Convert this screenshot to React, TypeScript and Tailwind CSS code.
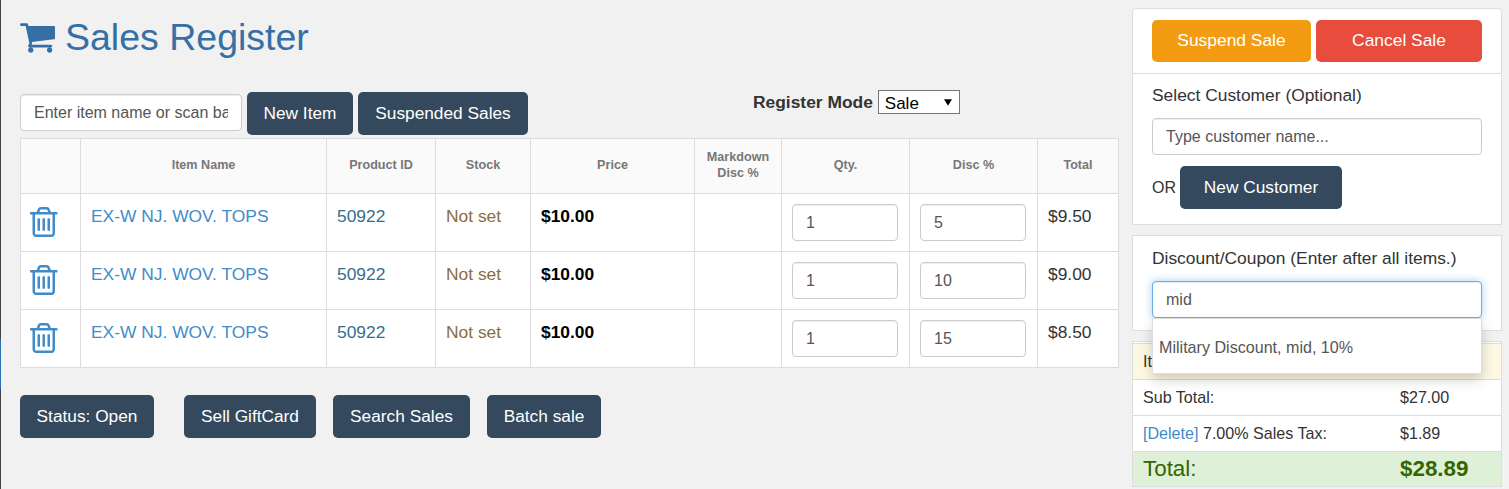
import React from 'react';

const darkBtn =
  'h-[43px] rounded-[5px] bg-[#34495e] text-[17.3px] leading-[43px] text-white text-center shrink-0';
const inputCls =
  'h-[37px] rounded-[4px] border border-[#ccc] bg-white px-[13px] text-[16px] text-[#555] placeholder:text-[#555] shadow-[inset_0_1px_1px_rgba(0,0,0,0.075)] outline-none';
const thCls =
  'border border-[#ddd] bg-[#fafafa] pb-[2px] text-center align-middle text-[12.6px] leading-[16px] font-bold text-[#777]';
const tdCls = 'border border-[#ddd] bg-white px-[10px] pt-[11px] align-top text-[17.4px] leading-[22px]';

function CartIcon() {
  return (
    <svg viewBox="0 256 1664 1408" className="h-[30px] w-[35px] fill-[#366fa5]">
      <path d="M640 1536q0 52-38 90t-90 38-90-38-38-90 38-90 90-38 90 38 38 90zm896 0q0 52-38 90t-90 38-90-38-38-90 38-90 90-38 90 38 38 90zm128-1088v512q0 24-16.500 42.500t-40.500 21.500l-1044 122q13 60 13 70 0 16-24 64h920q26 0 45 19t19 45-19 45-45 19h-1024q-26 0-45-19t-19-45q0-11 8-31.500t16-36 21.500-40 15.500-29.500l-177-823h-204q-26 0-45-19t-19-45 19-45 45-19h256q16 0 28.500 6.500t19.500 15.500 13 24.500 8 26 5.500 29.500 4.500 26h1201q26 0 45 19t19 45z" />
    </svg>
  );
}

function TrashIcon() {
  return (
    <svg viewBox="0 128 1408 1536" className="-ml-px h-[30px] w-[27.500px] fill-[#428bca]">
      <path d="M512 736v576q0 14-9 23t-23 9h-64q-14 0-23-9t-9-23v-576q0-14 9-23t23-9h64q14 0 23 9t9 23zm256 0v576q0 14-9 23t-23 9h-64q-14 0-23-9t-9-23v-576q0-14 9-23t23-9h64q14 0 23 9t9 23zm256 0v576q0 14-9 23t-23 9h-64q-14 0-23-9t-9-23v-576q0-14 9-23t23-9h64q14 0 23 9t9 23zm128 724v-948h-896v948q0 22 7 40.500t14.500 27 10.500 8.500h832q3 0 10.500-8.500t14.500-27 7-40.500zm-672-1076h448l-48-117q-7-9-17-11h-317q-10 2-17 11zm928 32v64q0 14-9 23t-23 9h-96v948q0 83-47 143.500t-113 60.500h-832q-66 0-113-58.500t-47-141.500v-952h-96q-14 0-23-9t-9-23v-64q0-14 9-23t23-9h309l70-167q15-37 54-63t79-26h320q40 0 79 26t54 63l70 167h309q14 0 23 9t9 23z" />
    </svg>
  );
}

const rows = [
  { disc: '5', total: '$9.50' },
  { disc: '10', total: '$9.00' },
  { disc: '15', total: '$8.50' },
];

function CartTable() {
  return (
    <table className="w-[1098px] table-fixed border-collapse">
      <colgroup>
        <col className="w-[60px]" />
        <col className="w-[246px]" />
        <col className="w-[109px]" />
        <col className="w-[95px]" />
        <col className="w-[164px]" />
        <col className="w-[87px]" />
        <col className="w-[128px]" />
        <col className="w-[128px]" />
        <col className="w-[81px]" />
      </colgroup>
      <thead>
        <tr className="h-[55px]">
          <th className={thCls}></th>
          <th className={thCls}>Item Name</th>
          <th className={thCls}>Product ID</th>
          <th className={thCls}>Stock</th>
          <th className={thCls}>Price</th>
          <th className={thCls}>
            Markdown
            <br />
            Disc %
          </th>
          <th className={thCls}>Qty.</th>
          <th className={thCls}>Disc %</th>
          <th className={thCls}>Total</th>
        </tr>
      </thead>
      <tbody>
        {rows.map((row) => (
          <tr key={row.disc} className="h-[58px]">
            <td className={tdCls}>
              <div className="mt-[2px]">
                <TrashIcon />
              </div>
            </td>
            <td className={`${tdCls} text-[#428bca]`}>EX-W NJ. WOV. TOPS</td>
            <td className={`${tdCls} text-[#31708f]`}>50922</td>
            <td className={`${tdCls} text-[#8a6d3b]`}>Not set</td>
            <td className={`${tdCls} font-bold text-black`}>$10.00</td>
            <td className={tdCls}></td>
            <td className={tdCls}>
              <input defaultValue="1" className={`${inputCls} -mt-px block w-[106px]`} />
            </td>
            <td className={tdCls}>
              <input defaultValue={row.disc} className={`${inputCls} -mt-px block w-[106px]`} />
            </td>
            <td className={`${tdCls} text-[#333]`}>{row.total}</td>
          </tr>
        ))}
      </tbody>
    </table>
  );
}

function SummaryRow({
  label,
  value,
  className,
}: {
  label: React.ReactNode;
  value?: React.ReactNode;
  className?: string;
}) {
  return (
    <div className={`flex items-center border-t border-[#ddd] pl-[10px] text-[16.1px] text-[#333] ${className ?? ''}`}>
      <div className="w-[257px]">{label}</div>
      <div>{value}</div>
    </div>
  );
}

export default function App() {
  return (
    <div
      className="relative flex h-[489px] w-[1509px] overflow-hidden bg-[#f1f1f1] pl-px text-[16px] text-[#333]"
      style={{ fontFamily: '"Liberation Sans", Arial, sans-serif' }}
    >
      <span className="absolute top-0 left-0 h-[489px] w-px bg-[#444]" />
      <span className="absolute top-[339px] left-0 h-[50px] w-px bg-[#2a6fb5]" />

      {/* left side */}
      <div className="ml-[19px] w-[1099px] shrink-0">
        <div className="flex h-[90px] items-start gap-[10px] pt-[14px]">
          <div className="mt-[9px]">
            <CartIcon />
          </div>
          <h1 className="text-[37.5px] leading-[46px] text-[#366fa5]">Sales Register</h1>
        </div>

        <div className="flex h-[48px] items-start">
          <input placeholder="Enter item name or scan barcode" className={`${inputCls} mt-[4px] w-[222px]`} />
          <button className={`${darkBtn} mt-[2px] ml-[5px] w-[106px] pb-[2px]`}>New Item</button>
          <button className={`${darkBtn} mt-[2px] ml-[5px] w-[170px]`}>Suspended Sales</button>
          <span className="ml-[225px] text-[17.4px] leading-[24px] font-bold">Register Mode</span>
          <div className="relative ml-[5px]">
            <select className="h-[24px] w-[82px] appearance-none rounded-none border border-[#767676] bg-white pl-[6px] text-[17px] text-black outline-none">
              <option>Sale</option>
            </select>
            <svg viewBox="0 0 10 8" className="absolute top-[9px] right-[8px] h-[7px] w-[8px] fill-black">
              <path d="M0 0h10L5 8z" />
            </svg>
          </div>
        </div>

        <CartTable />

        <div className="mt-[27px] flex">
          <button className={`${darkBtn} w-[134px]`}>Status: Open</button>
          <button className={`${darkBtn} ml-[30px] w-[132px]`}>Sell GiftCard</button>
          <button className={`${darkBtn} ml-[17px] w-[137px]`}>Search Sales</button>
          <button className={`${darkBtn} ml-[17px] w-[114px]`}>Batch sale</button>
        </div>
      </div>

      {/* right side */}
      <div className="ml-[13px] w-[370px] shrink-0 pt-[8px]">
        <div className="h-[217px] rounded-t-[4px] border border-[#ddd] bg-white">
          <div className="flex h-[65px] gap-[5px] border-b border-[#ddd] pt-[11px] pl-[19px] text-[17.4px]">
            <button className="h-[42px] w-[159px] rounded-[5px] bg-[#f39c12] pb-[2px] text-white">Suspend Sale</button>
            <button className="h-[42px] w-[166px] rounded-[5px] bg-[#e74c3c] pb-[2px] text-white">Cancel Sale</button>
          </div>
          <div className="px-[19px] pt-[10px]">
            <div className="text-[17.4px] leading-[22px]">Select Customer (Optional)</div>
            <input placeholder="Type customer name..." className={`${inputCls} mt-[12px] block w-[330px]`} />
            <div className="mt-[11px] flex items-center">
              <span className="w-[28px] text-[#333]">OR</span>
              <button className={`${darkBtn} w-[162px]`}>New Customer</button>
            </div>
          </div>
        </div>

        <div className="relative mt-[10px] h-[96px] border border-[#ddd] bg-white px-[19px] pt-[11px]">
          <div className="text-[17.4px] leading-[22px]">Discount/Coupon (Enter after all items.)</div>
          <input
            defaultValue="mid"
            className="mt-[12px] block h-[37px] w-[330px] rounded-[4px] border border-[#66afe9] bg-white px-[13px] text-[16px] text-[#555] shadow-[inset_0_1px_1px_rgba(0,0,0,0.075),0_0_8px_rgba(102,175,233,0.6)] outline-none"
          />
          <div className="absolute top-[82px] left-[19px] z-10 flex h-[56px] w-[330px] items-center border border-[#ddd] bg-white pt-[2px] pl-[6px] text-[16.1px] text-[#555] shadow-[0_6px_12px_rgba(0,0,0,0.175)]">
            Military Discount, mid, 10%
          </div>
        </div>

        <div className="mt-[10px] h-[146px] border border-[#ddd] bg-white pt-px">
          {/* the dropdown covers the rest of this row */}
          <SummaryRow label="It" className="h-[36px] bg-[#fcf8e3]" />
          <SummaryRow label="Sub Total:" value="$27.00" className="h-[36px]" />
          <SummaryRow
            label={
              <>
                <span className="text-[#428bca]">[Delete]</span> 7.00% Sales Tax:
              </>
            }
            value="$1.89"
            className="h-[36px]"
          />
          <div className="flex h-[35px] items-center border-t border-[#ddd] bg-[#dff0d8] pl-[10px] text-[22.4px] text-[#336600]">
            <div className="w-[257px]">Total:</div>
            <div className="font-bold">$28.89</div>
          </div>
        </div>
      </div>
    </div>
  );
}
